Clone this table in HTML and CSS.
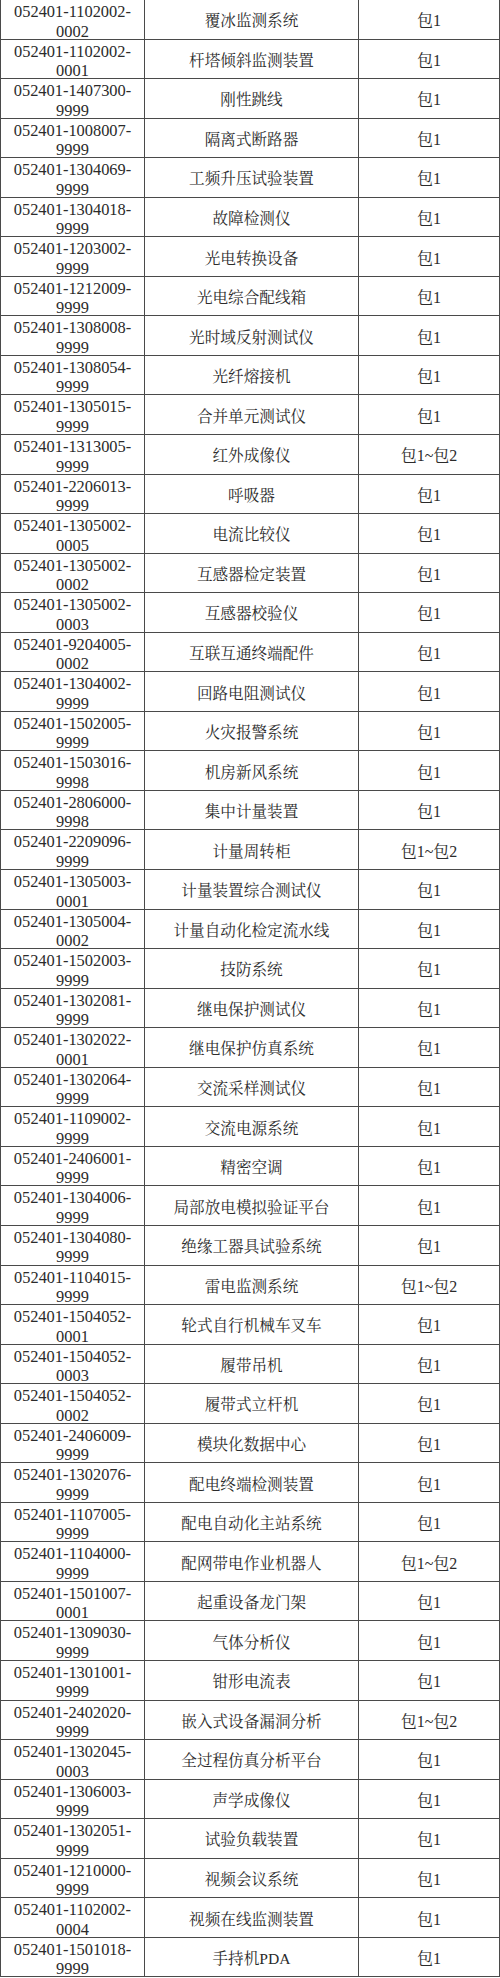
FILE: index.html
```html
<!DOCTYPE html>
<html lang="zh-CN">
<head>
<meta charset="utf-8">
<title>设备清单</title>
<link rel="stylesheet" href="styles.css">
</head>
<body>
<div class="sheet">
<div class="cell code"><span class="ln">052401-1102002-</span><span class="ln">0002</span></div><div class="cell name">覆冰监测系统</div><div class="cell pack">包1</div>
<div class="cell code"><span class="ln">052401-1102002-</span><span class="ln">0001</span></div><div class="cell name">杆塔倾斜监测装置</div><div class="cell pack">包1</div>
<div class="cell code"><span class="ln">052401-1407300-</span><span class="ln">9999</span></div><div class="cell name">刚性跳线</div><div class="cell pack">包1</div>
<div class="cell code"><span class="ln">052401-1008007-</span><span class="ln">9999</span></div><div class="cell name">隔离式断路器</div><div class="cell pack">包1</div>
<div class="cell code"><span class="ln">052401-1304069-</span><span class="ln">9999</span></div><div class="cell name">工频升压试验装置</div><div class="cell pack">包1</div>
<div class="cell code"><span class="ln">052401-1304018-</span><span class="ln">9999</span></div><div class="cell name">故障检测仪</div><div class="cell pack">包1</div>
<div class="cell code"><span class="ln">052401-1203002-</span><span class="ln">9999</span></div><div class="cell name">光电转换设备</div><div class="cell pack">包1</div>
<div class="cell code"><span class="ln">052401-1212009-</span><span class="ln">9999</span></div><div class="cell name">光电综合配线箱</div><div class="cell pack">包1</div>
<div class="cell code"><span class="ln">052401-1308008-</span><span class="ln">9999</span></div><div class="cell name">光时域反射测试仪</div><div class="cell pack">包1</div>
<div class="cell code"><span class="ln">052401-1308054-</span><span class="ln">9999</span></div><div class="cell name">光纤熔接机</div><div class="cell pack">包1</div>
<div class="cell code"><span class="ln">052401-1305015-</span><span class="ln">9999</span></div><div class="cell name">合并单元测试仪</div><div class="cell pack">包1</div>
<div class="cell code"><span class="ln">052401-1313005-</span><span class="ln">9999</span></div><div class="cell name">红外成像仪</div><div class="cell pack">包1~包2</div>
<div class="cell code"><span class="ln">052401-2206013-</span><span class="ln">9999</span></div><div class="cell name">呼吸器</div><div class="cell pack">包1</div>
<div class="cell code"><span class="ln">052401-1305002-</span><span class="ln">0005</span></div><div class="cell name">电流比较仪</div><div class="cell pack">包1</div>
<div class="cell code"><span class="ln">052401-1305002-</span><span class="ln">0002</span></div><div class="cell name">互感器检定装置</div><div class="cell pack">包1</div>
<div class="cell code"><span class="ln">052401-1305002-</span><span class="ln">0003</span></div><div class="cell name">互感器校验仪</div><div class="cell pack">包1</div>
<div class="cell code"><span class="ln">052401-9204005-</span><span class="ln">0002</span></div><div class="cell name">互联互通终端配件</div><div class="cell pack">包1</div>
<div class="cell code"><span class="ln">052401-1304002-</span><span class="ln">9999</span></div><div class="cell name">回路电阻测试仪</div><div class="cell pack">包1</div>
<div class="cell code"><span class="ln">052401-1502005-</span><span class="ln">9999</span></div><div class="cell name">火灾报警系统</div><div class="cell pack">包1</div>
<div class="cell code"><span class="ln">052401-1503016-</span><span class="ln">9998</span></div><div class="cell name">机房新风系统</div><div class="cell pack">包1</div>
<div class="cell code"><span class="ln">052401-2806000-</span><span class="ln">9998</span></div><div class="cell name">集中计量装置</div><div class="cell pack">包1</div>
<div class="cell code"><span class="ln">052401-2209096-</span><span class="ln">9999</span></div><div class="cell name">计量周转柜</div><div class="cell pack">包1~包2</div>
<div class="cell code"><span class="ln">052401-1305003-</span><span class="ln">0001</span></div><div class="cell name">计量装置综合测试仪</div><div class="cell pack">包1</div>
<div class="cell code"><span class="ln">052401-1305004-</span><span class="ln">0002</span></div><div class="cell name">计量自动化检定流水线</div><div class="cell pack">包1</div>
<div class="cell code"><span class="ln">052401-1502003-</span><span class="ln">9999</span></div><div class="cell name">技防系统</div><div class="cell pack">包1</div>
<div class="cell code"><span class="ln">052401-1302081-</span><span class="ln">9999</span></div><div class="cell name">继电保护测试仪</div><div class="cell pack">包1</div>
<div class="cell code"><span class="ln">052401-1302022-</span><span class="ln">0001</span></div><div class="cell name">继电保护仿真系统</div><div class="cell pack">包1</div>
<div class="cell code"><span class="ln">052401-1302064-</span><span class="ln">9999</span></div><div class="cell name">交流采样测试仪</div><div class="cell pack">包1</div>
<div class="cell code"><span class="ln">052401-1109002-</span><span class="ln">9999</span></div><div class="cell name">交流电源系统</div><div class="cell pack">包1</div>
<div class="cell code"><span class="ln">052401-2406001-</span><span class="ln">9999</span></div><div class="cell name">精密空调</div><div class="cell pack">包1</div>
<div class="cell code"><span class="ln">052401-1304006-</span><span class="ln">9999</span></div><div class="cell name">局部放电模拟验证平台</div><div class="cell pack">包1</div>
<div class="cell code"><span class="ln">052401-1304080-</span><span class="ln">9999</span></div><div class="cell name">绝缘工器具试验系统</div><div class="cell pack">包1</div>
<div class="cell code"><span class="ln">052401-1104015-</span><span class="ln">9999</span></div><div class="cell name">雷电监测系统</div><div class="cell pack">包1~包2</div>
<div class="cell code"><span class="ln">052401-1504052-</span><span class="ln">0001</span></div><div class="cell name">轮式自行机械车叉车</div><div class="cell pack">包1</div>
<div class="cell code"><span class="ln">052401-1504052-</span><span class="ln">0003</span></div><div class="cell name">履带吊机</div><div class="cell pack">包1</div>
<div class="cell code"><span class="ln">052401-1504052-</span><span class="ln">0002</span></div><div class="cell name">履带式立杆机</div><div class="cell pack">包1</div>
<div class="cell code"><span class="ln">052401-2406009-</span><span class="ln">9999</span></div><div class="cell name">模块化数据中心</div><div class="cell pack">包1</div>
<div class="cell code"><span class="ln">052401-1302076-</span><span class="ln">9999</span></div><div class="cell name">配电终端检测装置</div><div class="cell pack">包1</div>
<div class="cell code"><span class="ln">052401-1107005-</span><span class="ln">9999</span></div><div class="cell name">配电自动化主站系统</div><div class="cell pack">包1</div>
<div class="cell code"><span class="ln">052401-1104000-</span><span class="ln">9999</span></div><div class="cell name">配网带电作业机器人</div><div class="cell pack">包1~包2</div>
<div class="cell code"><span class="ln">052401-1501007-</span><span class="ln">0001</span></div><div class="cell name">起重设备龙门架</div><div class="cell pack">包1</div>
<div class="cell code"><span class="ln">052401-1309030-</span><span class="ln">9999</span></div><div class="cell name">气体分析仪</div><div class="cell pack">包1</div>
<div class="cell code"><span class="ln">052401-1301001-</span><span class="ln">9999</span></div><div class="cell name">钳形电流表</div><div class="cell pack">包1</div>
<div class="cell code"><span class="ln">052401-2402020-</span><span class="ln">9999</span></div><div class="cell name">嵌入式设备漏洞分析</div><div class="cell pack">包1~包2</div>
<div class="cell code"><span class="ln">052401-1302045-</span><span class="ln">0003</span></div><div class="cell name">全过程仿真分析平台</div><div class="cell pack">包1</div>
<div class="cell code"><span class="ln">052401-1306003-</span><span class="ln">9999</span></div><div class="cell name">声学成像仪</div><div class="cell pack">包1</div>
<div class="cell code"><span class="ln">052401-1302051-</span><span class="ln">9999</span></div><div class="cell name">试验负载装置</div><div class="cell pack">包1</div>
<div class="cell code"><span class="ln">052401-1210000-</span><span class="ln">9999</span></div><div class="cell name">视频会议系统</div><div class="cell pack">包1</div>
<div class="cell code"><span class="ln">052401-1102002-</span><span class="ln">0004</span></div><div class="cell name">视频在线监测装置</div><div class="cell pack">包1</div>
<div class="cell code"><span class="ln">052401-1501018-</span><span class="ln">9999</span></div><div class="cell name">手持机PDA</div><div class="cell pack">包1</div>
</div>
</body>
</html>
```
FILE: styles.css
```css
html, body {
  margin: 0;
  padding: 0;
  background: #ffffff;
}

.sheet {
  width: 500px;
  display: grid;
  grid-template-columns: 145px 214px 141px;
  grid-auto-rows: 39.56px;
  font-family: "Liberation Serif", "Noto Serif CJK SC", "Noto Sans CJK SC", serif;
  font-size: 16px;
  color: #2b2b2b;
}

.cell {
  box-sizing: border-box;
  border-bottom: 1px solid #4a4a4a;
  border-right: 1px solid #4a4a4a;
  text-align: center;
}

.code {
  padding-top: 2px;
  border-left: 1px solid #4a4a4a;
  font-size: 16.4px;
  line-height: 19.5px;
  white-space: nowrap;
}

.ln {
  display: table;
  margin: 0 auto;
  text-align: center;
}

.name,
.pack {
  display: flex;
  align-items: center;
  justify-content: center;
  padding-top: 4px;
  line-height: 20px;
}

.name {
  font-size: 15.6px;
}

.pack {
  font-size: 16px;
}
```
